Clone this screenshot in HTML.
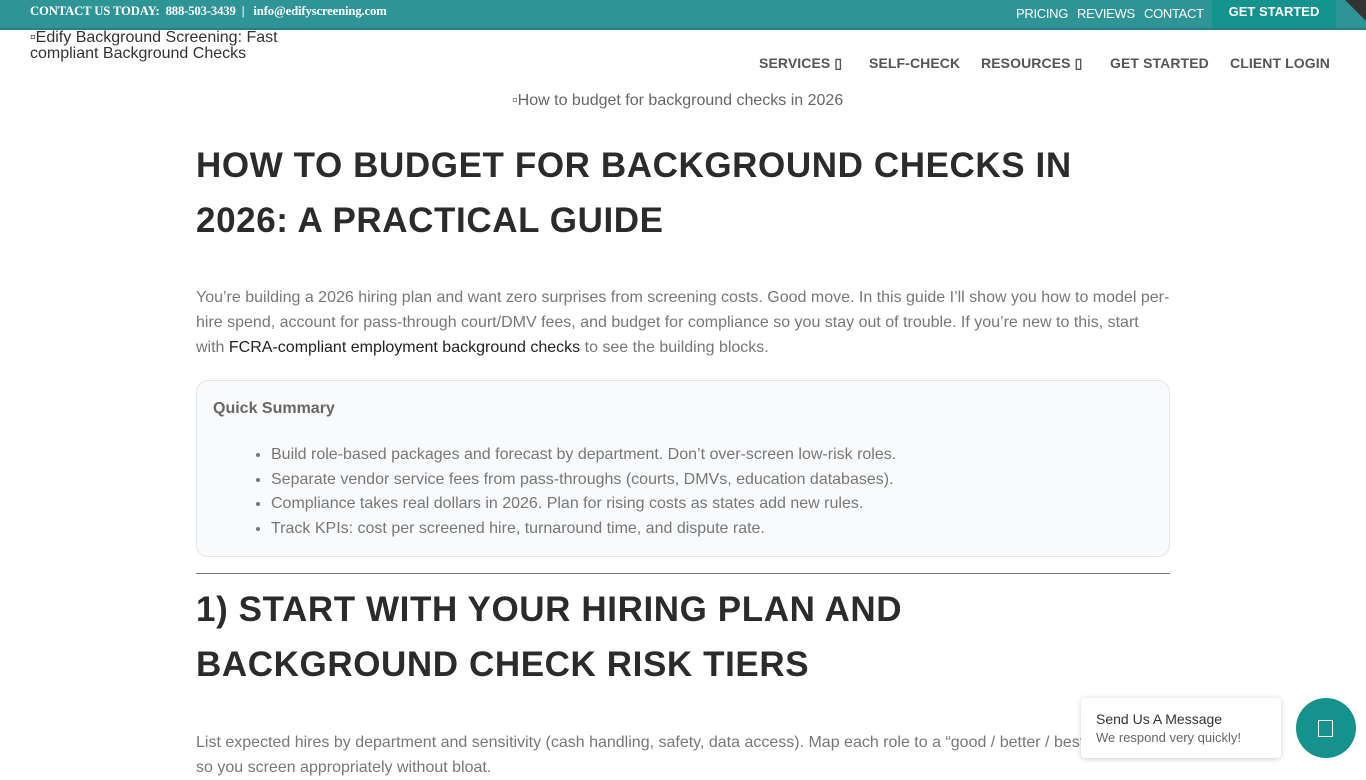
<!DOCTYPE html>
<html><head><meta charset="utf-8"><style>
*{margin:0;padding:0;box-sizing:border-box}
body{width:1366px;height:768px;overflow:hidden;background:#fff;font-family:"Liberation Sans",Arial,sans-serif;position:relative;color:#777}
.top{position:absolute;left:0;top:0;width:1366px;height:30px;background:#2f9496;border-bottom:2px solid #2a7f86}
.top .c{position:absolute;left:30px;top:4px;font-family:"Liberation Serif",serif;font-weight:bold;font-size:12.7px;color:#fff;letter-spacing:-0.15px}
.top .r{position:absolute;top:6px;font-size:13px;color:#fff;letter-spacing:-0.3px}
.gs{position:absolute;left:1212px;top:0;width:124px;height:28px;background:#14938e;color:#fff;font-weight:bold;font-size:13px;text-align:center;padding-top:4px}
.corner{position:absolute;left:1345px;top:0;width:0;height:0;border-top:21px solid #333;border-left:21px solid transparent}
.logo{position:absolute;left:30px;top:30px;font-size:16px;line-height:16px;color:#333}
.nav{position:absolute;top:55px;font-size:14px;font-weight:bold;color:#555;letter-spacing:0.1px}
.hero{position:absolute;left:512px;top:92px;font-size:16px;color:#666}
h1,h2{position:absolute;left:196px;font-size:35px;line-height:55px;font-weight:bold;color:#2b2b2b;letter-spacing:0.6px}
p{position:absolute;left:196px;width:1000px;font-size:16px;line-height:25px;color:#777}
a{color:#222;text-decoration:none}
.box{position:absolute;left:196px;top:380px;width:974px;height:177px;border:1px solid #e2e6ea;border-radius:12px;background:#f8fafc}
.box b{position:absolute;left:16px;top:19px;font-size:16px;color:#666}
.box ul{position:absolute;left:74px;top:62px;font-size:16px;line-height:24.6px;color:#777}
hr{position:absolute;left:196px;top:573px;width:974px;border:0;border-top:1px solid #777}
.msg{position:absolute;left:1081px;top:698px;width:200px;height:60px;background:#fff;box-shadow:0 1px 6px rgba(0,0,0,.2);border-radius:4px}
.msg .a{position:absolute;left:15px;top:13px;font-size:14px;color:#333}
.msg .b{position:absolute;left:15px;top:32px;font-size:13px;color:#666}
.btn{position:absolute;left:1296px;top:698px;width:60px;height:60px;border-radius:50%;background:#15918e}
.btn i{position:absolute;left:22px;top:22px;width:15px;height:17px;border:1.5px solid #fff}
</style></head><body>
<div class="top"><div class="c">CONTACT US TODAY:&nbsp; 888-503-3439 &nbsp;|&nbsp;&nbsp; info@edifyscreening.com</div>
<span class="r" style="left:1016px">PRICING</span><span class="r" style="left:1077px">REVIEWS</span><span class="r" style="left:1144px">CONTACT</span>
<div class="gs">GET STARTED</div><div class="corner"></div></div>
<div class="logo">▫Edify Background Screening: Fast<br>compliant Background Checks</div>
<span class="nav" style="left:759px">SERVICES ▯</span>
<span class="nav" style="left:869px">SELF-CHECK</span>
<span class="nav" style="left:981px">RESOURCES ▯</span>
<span class="nav" style="left:1110px">GET STARTED</span>
<span class="nav" style="left:1230px">CLIENT LOGIN</span>
<div class="hero">▫How to budget for background checks in 2026</div>
<h1 style="top:138px">HOW TO BUDGET FOR BACKGROUND CHECKS IN<br>2026: A PRACTICAL GUIDE</h1>
<p style="top:285px">You’re building a 2026 hiring plan and want zero surprises from screening costs. Good move. In this guide I’ll show you how to model per-<br>hire spend, account for pass-through court/DMV fees, and budget for compliance so you stay out of trouble. If you’re new to this, start<br>with <a>FCRA-compliant employment background checks</a> to see the building blocks.</p>
<div class="box"><b>Quick Summary</b><ul>
<li>Build role-based packages and forecast by department. Don’t over-screen low-risk roles.</li>
<li>Separate vendor service fees from pass-throughs (courts, DMVs, education databases).</li>
<li>Compliance takes real dollars in 2026. Plan for rising costs as states add new rules.</li>
<li>Track KPIs: cost per screened hire, turnaround time, and dispute rate.</li></ul></div>
<hr>
<h2 style="top:582px">1) START WITH YOUR HIRING PLAN AND<br>BACKGROUND CHECK RISK TIERS</h2>
<p style="top:730px">List expected hires by department and sensitivity (cash handling, safety, data access). Map each role to a “good / better / best” package<br>so you screen appropriately without bloat.</p>
<div class="msg"><div class="a">Send Us A Message</div><div class="b">We respond very quickly!</div></div>
<div class="btn"><i></i></div>
</body></html>
